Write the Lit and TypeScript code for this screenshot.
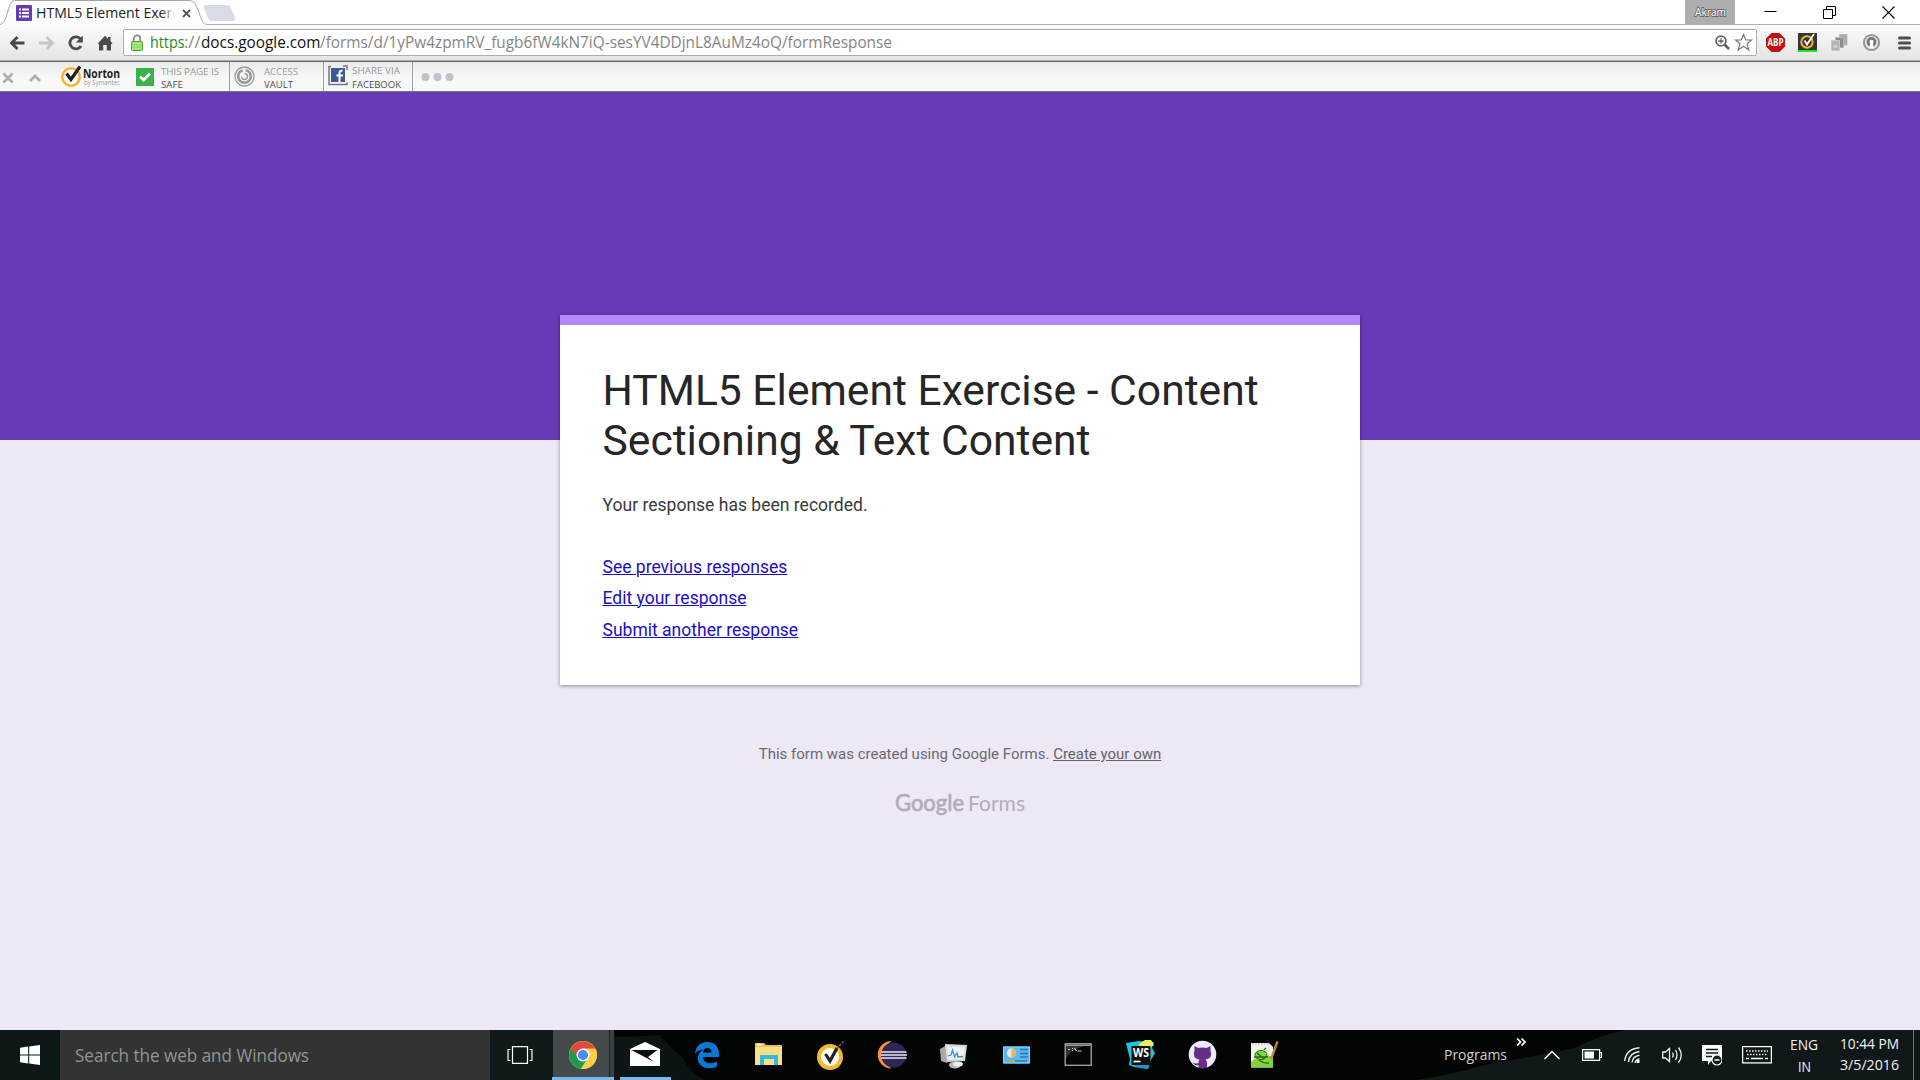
import { LitElement, html, css, svg } from "lit";
import { customElement } from "lit/decorators.js";

/* One line of interface text, set to a fixed advance width. */
const label = (text: string, width: number, size: number, cls = "") => html`
  <svg class="label ${cls}" width=${width} height=${Math.ceil(size * 1.4)}>
    <text x="0" y=${Math.round(size * 1.05)} font-size=${size} textLength=${width} lengthAdjust="spacingAndGlyphs">${text}</text>
  </svg>`;

@customElement("browser-tabs")
class BrowserTabs extends LitElement {
  static styles = css`
    :host { display: block; height: 24px; position: relative; background: #fff; }
    .row { display: flex; height: 25px; position: relative; }
    .shape { position: absolute; left: 0; top: 0; }
    .tab { position: relative; display: flex; width: 203px; height: 24px; padding-left: 16px; box-sizing: border-box; }
    .fav { margin-top: 5px; flex: none; }
    .name { width: 141px; margin: 3px 0 0 4px; height: 20px; overflow: hidden; flex: none; position: relative; }
    .name .fade { position: absolute; right: 0; top: 0; width: 16px; height: 20px; background: linear-gradient(90deg, #fff0, #fff 90%); }
    .close { margin: 9px 0 0 5px; flex: none; }
    .new { margin-top: 5px; position: relative; }
    .user { margin-left: auto; width: 50px; height: 24px; background: #aeaeae; display: flex; justify-content: center; align-items: center; position: relative; }
    .win { display: flex; gap: 46px; padding: 6px 25px 0 29px; position: relative; }
    .label { display: block; font-family: "Open Sans", sans-serif; fill: #222; overflow: visible; }
    .who { fill: #fff; stroke: #6a6a6a; stroke-width: 2px; paint-order: stroke; }
  `;
  render() {
    return html`<div class="row">
      <svg class="shape" width="1920" height="25">
        <path d="M-1 24.5C5 24 5 20 8 11C10 4 11 .5 16 .5H189C194 .5 195 3 198 10C202 20 202 24.5 208 24.5" fill="#fdfdfd" stroke="#a5a5a5"/>
        <path d="M207 24.5H1920" stroke="#adadad"/>
      </svg>
      <div class="tab">
        <svg class="fav" width="16" height="16"><rect width="16" height="16" rx="1" fill="#673ab7"/><path d="M3 4.5h2M6 4.5h7M3 8h2M6 8h7M3 11.500h2M6 11.500h7" stroke="#fff" stroke-width="2"/></svg>
        <div class="name">${label("HTML5 Element Exerc", 143, 14.5)}<div class="fade"></div></div>
        <svg class="close" width="9" height="9"><path d="M1 1l7 7M8 1l-7 7" stroke="#555" stroke-width="1.8"/></svg>
      </div>
      <svg class="new" width="33" height="16"><path d="M3 0H24Q27 0 28 3L32 13Q32.500 16 30 16H9Q6 16 5 13L.8 3Q0 0 3 0Z" fill="#d8dde5"/></svg>
      <div class="user">${label("Akram", 31, 11.5, "who")}</div>
      <div class="win">
        <svg width="13" height="13"><path d="M.5 5.500h12" stroke="#000"/></svg>
        <svg width="13" height="13" fill="none" stroke="#000"><path d="M.5 3.500h9v9h-9zM3.500 3V.5h9v9H10"/></svg>
        <svg width="13" height="13"><path d="M.5.5l12 12M12.500.5l-12 12" stroke="#000" stroke-width="1.100"/></svg>
      </div>
    </div>`;
  }
}

@customElement("browser-toolbar")
class BrowserToolbar extends LitElement {
  static styles = css`
    :host { display: flex; box-sizing: border-box; height: 37px; margin-top: 1px; padding: 4px 8px 0; background: linear-gradient(#fbfbfb, #e4e4e4); border-bottom: 1px solid #656266; box-shadow: inset 0 -1px #b0b0b0; }
    .nav { display: flex; width: 115px; flex: none; height: 27px; align-items: center; box-sizing: border-box; padding-left: 1px; }
    .nav svg + svg { margin-left: 13.5px; }
    .box { display: flex; flex: none; width: 1634px; height: 27px; box-sizing: border-box; border: 1px solid #adadad; border-radius: 2px; background: #fff; padding: 0 3px 0 7px; align-items: center; }
    .lock { margin-right: 6.5px; }
    .label { display: block; font-family: "Open Sans", sans-serif; overflow: visible; }
    .secure { fill: #1f8a1f; } .dim { fill: #858585; } .host { fill: #111; }
    .tools { margin-left: auto; display: flex; gap: 3px; align-items: center; }
    .ext { display: flex; align-items: center; height: 27px; margin-left: 9px; flex: none; gap: 13px; }
    .abp { font: 700 10px "Open Sans", sans-serif; fill: #fff; }
  `;
  render() {
    return html`
      <div class="nav">
        <svg width="16" height="16" fill="none" stroke="#484848" stroke-width="2.800"><path d="M15.500 8H3M8.500 2L2.500 8l6 6"/></svg>
        <svg width="16" height="16" fill="none" stroke="#c6c6c6" stroke-width="2.800"><path d="M0 8h13M7.500 2l6 6l-6 6"/></svg>
        <svg width="16" height="16" fill="none"><path d="M12.300 3.800A6 6 0 1 0 13 11" stroke="#4b4b4b" stroke-width="2.800"/><path d="M14.800 .500V7.500H7.800Z" fill="#4b4b4b"/></svg>
        <svg width="16" height="16"><path d="M7 .800L0 8.300L1 9.500V15.500H5.200V10H8.800V15.500H13V9.500L14.500 8.300L12.500 6.200V2H10V3.700Z" fill="#4b4b4b"/></svg>
      </div>
      <div class="box">
        <svg class="lock" width="12" height="18"><path d="M2.800 8V4.500a3.200 3.200 0 0 1 6.400 0V8" fill="none" stroke="#888" stroke-width="1.700"/><rect x=".5" y="7.500" width="11" height="9" rx="1" fill="#8edc66" stroke="#58a73a"/><path d="M1.500 9.500h9M1.500 12h9M1.500 14.500h9" stroke="#b5ee91" stroke-width=".8"/></svg>
        ${label("https", 34.5, 16.3, "secure")}${label("://", 16.5, 16.3, "dim")}${label("docs.google.com", 119.5, 16.3, "host")}${label("/forms/d/1yPw4zpmRV_fugb6fW4kN7iQ-sesYV4DDjnL8AuMz4oQ/formResponse", 572, 16.3, "dim")}
        <div class="tools">
          <svg width="17" height="17" fill="none" stroke="#5c5c5c"><circle cx="7" cy="7" r="5" stroke-width="1.600"/><path d="M4.500 7h5M7 4.500v5" stroke-width="1.300"/><path d="M10.500 10.500L15 15" stroke-width="2.500"/></svg>
          <svg width="19" height="19"><path d="M9.500 1.500L11.800 7H17.500L13 10.800L14.800 17L9.500 13.300L4.200 17L6 10.800L1.500 7H7.200Z" fill="#fff" stroke="#777" stroke-width="1.200"/></svg>
        </div>
      </div>
      <div class="ext">
        <svg width="19" height="19"><path d="M5.600 0h7.800L19 5.600v7.800L13.400 19H5.600L0 13.400V5.600Z" fill="#c70d0d"/><text class="abp" x="1.500" y="13" textLength="16" lengthAdjust="spacingAndGlyphs">ABP</text></svg>
        <svg width="19" height="19"><path d="M0 0h19v19H0z" fill="#353535"/><path d="M0 17h19v2H0z" fill="#15ee15"/><circle cx="9" cy="9" r="5.700" fill="none" stroke="#f4b62a" stroke-width="2"/><path d="M6.500 7.500l2.500 4L16 1" fill="none" stroke="#fff" stroke-width="1.800"/></svg>
        <svg width="19" height="19"><path d="M9.500 1.500H17V12H9.500z" fill="#aaa" stroke="#bbb"/><path d="M5.500 4.500h8v10h-8z" fill="#8d8d8d" stroke="#b5b5b5"/><path d="M1.500 7.500h8v10h-8z" fill="#b4b4b4" stroke="#c8c8c8"/><path d="M3.500 12h4v3h-4z" fill="#ccc"/></svg>
        <svg width="19" height="19"><circle cx="9.500" cy="9.500" r="7.600" fill="#e8e8e8" stroke="#959595" stroke-width="2"/><circle cx="9.500" cy="9" r="4.900" fill="#777"/><path d="M7.500 14.500L8 11Q6.500 6.800 9.500 6.800T11 11L11.500 14.500Z" fill="#fff"/></svg>
        <svg width="18" height="14"><path d="M5.500 2h10M5.500 7h10M5.500 12h10" stroke="#4e4e4e" stroke-width="3" stroke-linecap="round"/></svg>
      </div>`;
  }
}

@customElement("norton-bar")
class NortonBar extends LitElement {
  static styles = css`
    :host { display: flex; height: 30px; box-sizing: border-box; background: linear-gradient(#ebebeb, #f8f8f8 60%); border-bottom: 1px solid #777; }
    .lead { width: 60px; flex: none; padding: 10px 0 0 2px; box-sizing: border-box; display: flex; gap: 15px; }
    .brand { display: flex; width: 76px; flex: none; }
    .item { display: flex; height: 29px; box-sizing: border-box; border-right: 1px solid #a0a0a0; }
    .safe { width: 94px; padding-top: 6px; }
    .vault { width: 94px; padding: 4px 0 0 4px; }
    .share { width: 89px; padding: 3px 0 0 4px; }
    .words { display: flex; flex-direction: column; }
    .safe .words { margin: -3px 0 0 7px; } .vault .words { margin: -1px 0 0 9px; } .share .words { margin: -1px 0 0 4px; }
    .label { display: block; font-family: "Open Sans", sans-serif; overflow: visible; fill: #505050; height: 14px; }
    .grey { fill: #999; }
    .dots { margin: 11px 0 0 8px; }
    .n { font: 700 12.5px "Open Sans", sans-serif; fill: #222; } .s { font: 7px "Open Sans", sans-serif; fill: #999; }
  `;
  render() {
    return html`
      <div class="lead">
        <svg width="12" height="12"><path d="M1.500 1.500l9 9M10.500 1.500l-9 9" stroke="#adadad" stroke-width="2.600"/></svg>
        <svg width="13" height="12"><path d="M1 9l5-5l5 5" fill="none" stroke="#adadad" stroke-width="2.800"/></svg>
      </div>
      <svg class="brand" width="76" height="28"><circle cx="11" cy="15" r="8.700" fill="#fff" stroke="#f6b331" stroke-width="2.500"/><path d="M6.500 11.500L11 17.500L20 4.500" fill="none" stroke="#222" stroke-width="3.300"/><text class="n" x="23" y="15.500" textLength="37" lengthAdjust="spacingAndGlyphs">Norton</text><text class="s" x="24" y="23" textLength="36" lengthAdjust="spacingAndGlyphs">by Symantec</text></svg>
      <div class="item safe">
        <svg width="18" height="18"><path d="M0 0h18v18H0z" fill="#36b34a"/><path d="M4 8.500l3.700 3.500L14 5.500" stroke="#fff" stroke-width="2.800" fill="none"/></svg>
        <div class="words">${label("THIS PAGE IS", 58, 9.2, "grey")}${label("SAFE", 22, 9.2)}</div>
      </div>
      <div class="item vault">
        <svg width="21" height="21" fill="none" stroke="#9a9a9a"><circle cx="10.500" cy="10.500" r="9.500" stroke-width="1.300"/><circle cx="10.500" cy="10.500" r="6.300" stroke-width="2.600" stroke-dasharray="27 3"/><path d="M7 7l5 5" stroke="#f5f5f5" stroke-width="2"/><path d="M7.500 10.500a3 3 0 1 0 3-3" stroke-width="1.300"/></svg>
        <div class="words">${label("ACCESS", 34, 9.2, "grey")}${label("VAULT", 29, 9.2)}</div>
      </div>
      <div class="item share">
        <svg width="20" height="21"><path d="M3 1.500H1v18h18v-2M15 1h4v4" fill="none" stroke="#777" stroke-width="1.500"/><path d="M3 3h14v14H3z" fill="#3d5a98"/><path d="M11.500 17V8Q11.500 5.500 14.500 5.500M8.500 10.500H15" fill="none" stroke="#fff" stroke-width="2"/></svg>
        <div class="words">${label("SHARE VIA", 48, 9.2, "grey")}${label("FACEBOOK", 49, 9.2)}</div>
      </div>
      <svg class="dots" width="34" height="8" fill="#bcc3ca"><circle cx="4.500" cy="4" r="4"/><circle cx="16.500" cy="4" r="4"/><circle cx="28.500" cy="4" r="4"/></svg>`;
  }
}

@customElement("form-page")
class FormPage extends LitElement {
  static styles = css`
    :host { display: flex; flex-direction: column; align-items: center; height: 938px; box-sizing: border-box; padding-top: 223px; background: linear-gradient(#673ab7 348px, #ede7f6 348px); font-family: Roboto, sans-serif; }
    .card { width: 800px; height: 370px; box-sizing: border-box; border-top: 10px solid #b388ff; background: #fff; box-shadow: 0 1px 4px rgba(0,0,0,.4); padding: 40px 42.5px 0; flex: none; }
    h1 { margin: 0; font-weight: 400; font-size: 42.6px; line-height: 50px; color: #262626; }
    p { margin: 27px 0 32.4px; font-size: 17.54px; line-height: 27.5px; color: #3a3a3a; }
    .links { display: flex; flex-direction: column; align-items: flex-start; }
    .links a { font-size: 17.52px; line-height: 31.5px; color: #1a0dc8; text-decoration: underline; text-decoration-thickness: 1px; }
    .foot { margin-top: 58px; font-size: 15px; line-height: 22px; color: #6b6b6b; }
    .foot a { color: #646464; text-decoration: underline; }
    .logo { margin-top: 24px; font-family: Lato, sans-serif; fill: #b3abbd; overflow: visible; }
    .g { font-weight: 400; font-size: 23px; stroke: #b3abbd; stroke-width: .7px; } .f { font-weight: 400; font-size: 22px; }
  `;
  render() {
    return html`
      <div class="card">
        <h1>HTML5 Element Exercise - Content Sectioning &amp; Text Content</h1>
        <p>Your response has been recorded.</p>
        <div class="links"><a>See previous responses</a><a>Edit your response</a><a>Submit another response</a></div>
      </div>
      <div class="foot">This form was created using Google Forms. <a>Create your own</a></div>
      <svg class="logo" width="130" height="30"><text class="g" x="0" y="22" textLength="69" lengthAdjust="spacingAndGlyphs">Google</text><text class="f" x="73" y="22" textLength="57" lengthAdjust="spacingAndGlyphs">Forms</text></svg>`;
  }
}

const apps = [
  svg`<circle cx="15" cy="15" r="14" fill="#fcc934"/><path d="M15 15L2.900 8A14 14 0 0 0 13 28.800L20 18Z" fill="#229a4c"/><path d="M2.900 8A14 14 0 0 1 27.100 8.500H15L10 18Z" fill="#df4a3c"/><path d="M27.600 9A14 14 0 0 1 13 28.800L20 18V9Z" fill="#fcd04a"/><circle cx="15" cy="15" r="6.500" fill="#fff"/><circle cx="15" cy="15" r="5.100" fill="#4a8af4"/>`,
  svg`<path d="M0 9L15 2L30 9V26H0Z" fill="#fff"/><path d="M1.500 10H27.500L18 17L24 22L1.500 10Z" fill="#0a0f10"/>`,
  svg`<path d="M3 13.500C4 5.500 9 2 15.500 2C23 2 27 7.500 27 13.500V17H11C11 21 14.500 23.300 18.500 23.300Q22 23.300 25 21.500V26.500Q22 28.200 17.500 28.200C10 28.200 5.800 23.500 5.800 18.500C5.800 14 8.500 11 11.500 9.500Q6.500 9.500 3 13.500ZM11.200 12.500H19.500Q19.500 8 15.500 8T11.200 12.500Z" fill="#0b78d7"/>`,
  svg`<path d="M1 3H10L12 5H28V25H1Z" fill="#e8c05a"/><path d="M1 7H28V25H1Z" fill="#fbdf86"/><path d="M3 4h5v1.500H3z" fill="#fff"/><path d="M6 25V15H24V25H20V19H10V25Z" fill="#31b8e6"/>`,
  svg`<circle cx="14" cy="17" r="11" fill="#fff" stroke="#f2bd2a" stroke-width="4"/><path d="M9.500 14L14 21L21 8" fill="none" stroke="#222" stroke-width="3.200"/><path d="M21 8L28.500 .5" stroke="#8a6a20" stroke-width="1.700" stroke-dasharray="2 1.500"/>`,
  svg`<path d="M14.500 1A13.500 13.500 0 0 0 14.500 28.500A17 17 0 0 1 14.500 1Z" fill="#f29435"/><circle cx="16.700" cy="15" r="12.600" fill="#302557"/><path d="M4.200 12H29.500M3.700 15H30M4.200 18H29.500" stroke="#ebe8f4" stroke-width="1.700"/>`,
  svg`<path d="M1 9L8 5V23L2 21Z" fill="#aaa"/><path d="M6 4L28 5L26 21L8 22Z" fill="#dcdcd6"/><path d="M8.500 6.500L25.500 7.500L24 19L9 19.500Z" fill="#e9f4fc"/><path d="M9 16L12 15L13.500 10L15.500 17L18 13L19 17L24 16.500" fill="none" stroke="#4b8db8" stroke-width="1.300"/><ellipse cx="16" cy="25" rx="6" ry="3.500" fill="#bbb"/><ellipse cx="19" cy="24" rx="5" ry="2.500" fill="#eee"/>`,
  svg`<path d="M2 6.500h27v17h-27z" fill="#58b9ec"/><path d="M2.500 7h26v16h-26z" fill="none" stroke="#8dd6fa"/><circle cx="10.500" cy="13" r="4.700" fill="#d9edf7"/><path d="M10.500 13V8.300A4.700 4.700 0 0 1 10.500 17.700Z" fill="#e5b955"/><path d="M19 9.500h8M19 13.500h8M19 17h8M6 21h20" stroke="#2a7cb0" stroke-width="1.300"/><path d="M6 20.300h8v1.500H6z" fill="#d8b35a"/>`,
  svg`<rect x="2.200" y="3.800" width="26" height="21.500" fill="#060606" stroke="#aaa" stroke-width="1.300"/><path d="M3 4.500H27.500V6H3Z" fill="#999"/><path d="M3 6H22Q8 9 3 18Z" fill="#333"/><path d="M5 9.500h2M9 8.500h1M9 10.500h1M11.500 8l2 3M14.500 11h4" stroke="#ccc" stroke-width="1.200"/>`,
  svg`<path d="M1 3L14 1L29 2L27 8L30 13L26 20L23 29L9 27L4 25L5 19Z" fill="#20c5dd"/><path d="M14 4L20 0H26L29 5L26 7L15 8Z" fill="#edf05c"/><path d="M5 19L9 26L23 29L24 22Z" fill="#0e96dc"/><path d="M6.500 6h19v19h-19z" fill="#101010"/><text x="8" y="16.500" font-family="Open Sans,sans-serif" font-weight="700" font-size="11.500" fill="#fff" textLength="16" lengthAdjust="spacingAndGlyphs">WS</text><path d="M8.500 21.500h7" stroke="#fff" stroke-width="1.700"/>`,
  svg`<circle cx="15.500" cy="14.500" r="13.800" fill="#ece9fb"/><path d="M7.500 6L11.500 8Q15.500 7 19.500 8L23.500 6V11Q25 14 23.500 17Q22 19 18.500 19.500Q20 21 20 23V28H11.500V25Q7 26 6 22.500Q9 24 11.500 23Q11.500 20.500 12.500 19.500Q8.500 19 7.300 16.500Q6 13 7.500 11Z" fill="#642e89"/>`,
  svg`<path d="M2 3H20L24 7V27.500H2Z" fill="#f0f3e9"/><path d="M2 22Q13 12 24 17V27.500H2Z" fill="#83d33e"/><path d="M3 4h17" stroke="#aaa" stroke-dasharray="1.500 1.500"/><ellipse cx="12" cy="15" rx="6" ry="4.500" fill="#83d33e" stroke="#276b20"/><path d="M5 17H19M8 13l7 6M15 10l2-2M10 20q5 4 10 3" fill="none" stroke="#276b20" stroke-width="1.300"/><path d="M28.500 1.500L22 19" stroke="#c28b2d" stroke-width="2.300"/>`,
];

@customElement("task-bar")
class TaskBar extends LitElement {
  static styles = css`
    :host { display: block; height: 50px; position: relative; overflow: hidden; background: #030504; }
    .wall { position: absolute; inset: 0; }
    .bar { position: relative; display: flex; height: 50px; }
    .start { width: 60px; flex: none; display: flex; align-items: center; justify-content: center; }
    .search { width: 430px; box-sizing: border-box; flex: none; padding: 13px 0 0 15px; background: #333; }
    .view { width: 60px; margin-right: 2px; flex: none; display: flex; align-items: center; justify-content: center; box-sizing: border-box; }
    .label { display: block; font-family: "Open Sans", sans-serif; fill: #f2f2f2; overflow: visible; }
    .hint { fill: #949494; } .soft { fill: #cfcfcf; }
    .app { width: 61.9px; flex: none; height: 50px; display: flex; align-items: center; justify-content: center; box-sizing: border-box; }
    .active { background: linear-gradient(90deg, transparent 1px, #444a4b 1px 57px, #1f2526 57px 58px, #3b4142 58px); border-bottom: 3px solid #76b9ed; padding-top: 3px; }
    .open { background: linear-gradient(90deg, transparent 6px, #76b9ed 6px 57px, transparent 57px) bottom / 100% 3px no-repeat; }
    .tray { margin-left: auto; display: flex; align-items: center; width: 476px; flex: none; }
    .prog { margin-bottom: 1px; } .more { margin: 0 0 27px 9px; } .up { margin-left: 18px; }
    .bat { margin-left: 22px; } .wifi { margin-left: 22px; } .vol { margin-left: 22px; } .note { margin-left: 19px; } .keys { margin-left: 20px; }
    .lang, .clock { display: flex; flex-direction: column; align-items: center; height: 50px; box-sizing: border-box; padding-top: 5px; }
    .lang { margin-left: 18px; gap: 1px; } .clock { margin-left: 22px; padding-top: 4px; }
    .edge { width: 1px; height: 50px; background: #6f7475; margin-left: 14px; }
  `;
  render() {
    return html`
      <svg class="wall" width="1920" height="50"><defs><linearGradient id="w"><stop offset="0" stop-color="#0e1718"/><stop offset=".75" stop-color="#10191a"/><stop offset="1" stop-color="#0b1213"/></linearGradient></defs><path d="M0 0H570Q600 10 660 5Q670 18 682 27Q690 43 704 50H0Z" fill="url(#w)"/><path d="M1415 50Q1455 44 1480 36Q1535 26 1575 18Q1600 5 1625 0H1920V50Z" fill="#10181a"/></svg>
      <div class="bar">
        <div class="start"><svg width="20" height="20" fill="#fff"><path d="M0 2.800L8.200 1.600V9.500H0ZM9.200 1.500L20 0V9.500H9.200ZM0 10.500H8.200V18.500L0 17.300ZM9.200 10.500H20V20L9.200 18.600Z"/></svg></div>
        <div class="search">${label("Search the web and Windows", 234, 18, "hint")}</div>
        <div class="view"><svg width="26" height="18" fill="none" stroke="#fff" stroke-width="1.200"><path d="M5.500.6h15v16.800h-15zM3.500 3.500h-2.500v11h2.500M22.500 3.500h2.500v11h-2.500"/></svg></div>
        ${apps.map((icon, i) => html`<div class="app ${i === 0 ? "active" : i === 1 ? "open" : ""}"><svg width="30" height="30">${icon}</svg></div>`)}
        <div class="tray">
          <div class="prog">${label("Programs", 63, 14, "soft")}</div>
          <svg class="more" width="10" height="8" fill="none" stroke="#fff" stroke-width="1.700"><path d="M1 .5L4.500 4L1 7.500M5.500.5L9 4L5.500 7.500"/></svg>
          <svg class="up" width="16" height="10" fill="none" stroke="#fff" stroke-width="1.400"><path d="M.5 9L8 1.500L15.500 9"/></svg>
          <svg class="bat" width="20" height="12"><path d="M.6.6h17v10.800H.6zM18 3.500h1.500v5H18" fill="none" stroke="#fff" stroke-width="1.200"/><path d="M2.500 2.500h9.500v7H2.500z" fill="#fff"/></svg>
          <svg class="wifi" width="16" height="16" fill="none" stroke="#e8e8e8" stroke-width="1.400"><path d="M.7 14Q2 2 15.500.8M4.500 15Q5 6 15.500 4.500M8 15.500Q8.500 9.500 15.500 8.300M11 15.800Q11.500 12.500 15.500 12"/><rect x="12.500" y="13" width="3" height="3" fill="#fff" stroke="none"/></svg>
          <svg class="vol" width="21" height="18" fill="none" stroke="#f2f2f2" stroke-width="1.300"><path d="M.7 6H3.500L7.500 2.500V15.500L3.500 12H.7ZM10.500 6.500Q12 9 10.500 11.500M13.500 4Q16.500 9 13.500 14M16.500 1.500Q22 9 16.500 16.500"/></svg>
          <svg class="note" width="20" height="21"><path d="M0 0h20v16H9L6 20V16H0Z" fill="#fff"/><path d="M4 4.500h12M4 8h12M4 11.500h6" stroke="#10181a" stroke-width="1.400"/><circle cx="15" cy="15" r="5" fill="#10181a" stroke="#fff" stroke-width="1.200"/><path d="M12.500 15h5" stroke="#fff" stroke-width="1.500"/></svg>
          <svg class="keys" width="30" height="18" fill="none" stroke="#fff"><rect x=".6" y=".6" width="28.800" height="16.300" stroke-width="1.300"/><path d="M4 5h22M5 8.500h21" stroke-width="1.400" stroke-dasharray="1.500 1.500"/><path d="M4 12.500h3M9 12.500h12M23 12.500h3" stroke-width="1.400"/></svg>
          <div class="lang">${label("ENG", 28, 14.3)}${label("IN", 13, 14.3)}</div>
          <div class="clock">${label("10:44 PM", 59, 14.3)}${label("3/5/2016", 59, 14.3)}</div>
          <div class="edge"></div>
        </div>
      </div>`;
  }
}

@customElement("app-root")
class AppRoot extends LitElement {
  static styles = css`
    :host { display: block; width: 1920px; height: 1080px; overflow: hidden; background: #fff; }
  `;
  render() {
    return html`<browser-tabs></browser-tabs><browser-toolbar></browser-toolbar><norton-bar></norton-bar><form-page></form-page><task-bar></task-bar>`;
  }
}
